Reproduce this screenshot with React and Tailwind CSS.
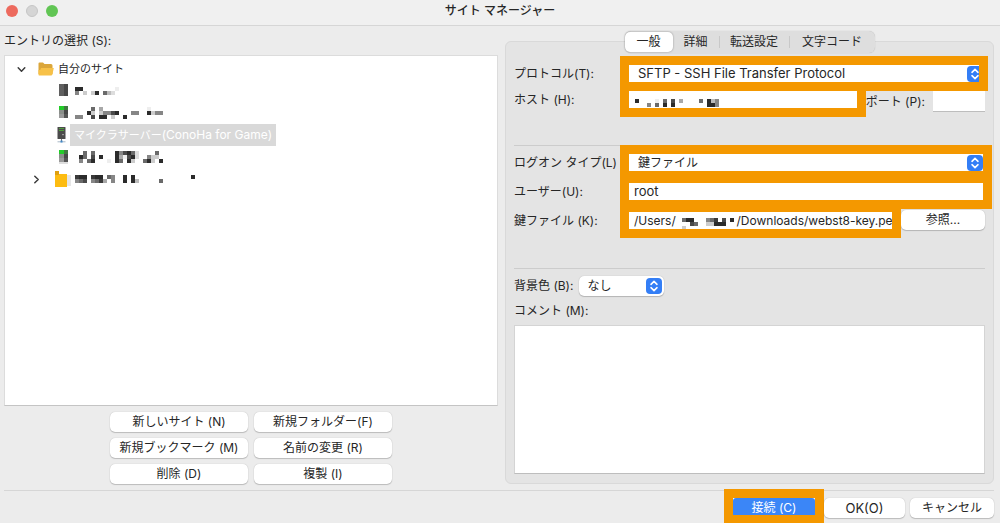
import React from 'react';

const shades = {
  2: '#2b2b2b',
  3: '#3a3a3a',
  4: '#4a4a4a',
  6: '#6a6a6a',
  8: '#868686',
  a: '#a8a8a8',
  b: '#bcbcbc',
  c: '#cccccc',
  d: '#dddddd',
  e: '#eeeeee',
};

// Masked text: every character is one 4px cell, '.' is empty
const Mosaic = ({ rows }) => {
  const cols = Math.max(...rows.map((row) => row.length));
  return (
    <svg width={cols * 4} height={rows.length * 4} shapeRendering="crispEdges" aria-hidden="true" className="shrink-0">
      {rows.map((row, y) =>
        row.split('').map((c, x) =>
          shades[c] ? <rect key={`${x}-${y}`} x={x * 4} y={y * 4} width="4" height="4" fill={shades[c]} /> : null
        )
      )}
    </svg>
  );
};

const FolderOpenIcon = () => (
  <svg width="16" height="14" viewBox="0 0 16 14" className="shrink-0">
    <path d="M0.5 1.5Q0.5 0.5 1.5 0.5H5L6.5 2H13Q14.5 2 14.5 3.5V12H0.5Z" fill="#dba63a" />
    <path d="M3 6H15.8L14.4 12.5Q14.2 13.5 13 13.5H1.2Q0.4 13.4 0.5 12.5V8H2.2Z" fill="#f7c148" />
  </svg>
);

const ServerIcon = () => (
  <svg width="9" height="16" viewBox="0 0 9 16" className="shrink-0">
    <rect x="0.5" y="0" width="8" height="12" rx="0.6" fill="#4b4b4b" />
    <path d="M2 1.5H7M2 3.5H7" stroke="#4f9d3c" strokeWidth="1" />
    <rect x="5.4" y="7" width="1.2" height="1.2" fill="#cfcfcf" />
    <path d="M4.5 12V14" stroke="#777" strokeWidth="1" />
    <path d="M0.5 14.8H8.5" stroke="#a9b8c6" strokeWidth="1" />
    <rect x="3.5" y="13.5" width="2" height="2" fill="#3e86c8" />
  </svg>
);

const MaskedServerIcon = ({ online, shadow }) => (
  <svg width="9" height="14" viewBox="0 0 9 14" shapeRendering="crispEdges" className="shrink-0">
    <rect width="5" height="12" fill="#606060" />
    <rect x="5" width="4" height="12" fill="#484848" />
    {online && (
      <>
        <rect width="5" height="4" fill="#22cc28" />
        <rect x="5" width="4" height="4" fill="#3f7a40" />
        <rect y="4" width="5" height="4" fill="#8a8f8a" />
        <rect y="8" width="5" height="4" fill="#9a9a9a" />
        <rect x="5" y="8" width="4" height="4" fill="#555" />
      </>
    )}
    {shadow && <rect y="12" width="9" height="2" fill="#dedede" />}
  </svg>
);

const MaskedFolderIcon = () => (
  <svg width="16" height="16" viewBox="0 0 16 16" shapeRendering="crispEdges" className="shrink-0">
    <rect x="12" y="4" width="4" height="11" fill="#e6e6e6" />
    <path d="M0 3H12V16H0Z" fill="#fdbc11" />
    <rect width="4" height="4" fill="#dfa010" />
  </svg>
);

const Chevron = ({ open }) => (
  <svg width="9" height="9" viewBox="0 0 9 9" fill="none" stroke="#3c3c3c" strokeWidth="1.5" strokeLinecap="round" strokeLinejoin="round">
    <path d={open ? 'M1.2 2.8L4.5 6.2L7.8 2.8' : 'M2.8 1.2L6.2 4.5L2.8 7.8'} />
  </svg>
);

const Stepper = ({ className = 'right-0' }) => (
  <svg width="16" height="16" viewBox="0 0 16 16" fill="none" className={`pointer-events-none absolute top-1/2 -translate-y-1/2 ${className}`}>
    <rect width="16" height="16" rx="4" fill="#337ef6" />
    <path d="M5 6.3L8 3.4L11 6.3M5 9.7L8 12.6L11 9.7" stroke="#fff" strokeWidth="1.6" strokeLinecap="round" strokeLinejoin="round" />
  </svg>
);

const Button = ({ children, className = '' }) => (
  <button type="button" className={`h-5 rounded-[5px] bg-white text-center leading-5 shadow-[0_0_1px_#00000040,0_1px_1px_#00000030] ${className}`}>
    {children}
  </button>
);

const TreeRow = ({ children, className = '' }) => (
  <li className={`flex h-[22px] items-center ${className}`}>{children}</li>
);

const EntryList = () => (
  <section className="flex w-[494px] shrink-0 flex-col">
    <h2 className="h-[29px] leading-[29px]">エントリの選択 (S):</h2>
    <ul className="h-[351px] border border-[#dcdcdc] border-b-[#c4c4c4] bg-white pt-[2px] text-[11px]">
      <TreeRow className="pl-3">
        <Chevron open />
        <span className="ml-3 flex items-center gap-1">
          <FolderOpenIcon />
          自分のサイト
        </span>
      </TreeRow>
      <TreeRow className="gap-[7px] pl-[54px]">
        <MaskedServerIcon />
        <Mosaic rows={['22........e', '8.c.c2.6bd.']} />
      </TreeRow>
      <TreeRow className="gap-[7px] pl-[54px]">
        <MaskedServerIcon online />
        <Mosaic rows={['....6.a...........e', '...2c.c8842...88..2c88', '88..4.22.c..2']} />
      </TreeRow>
      <TreeRow className="gap-1 pl-[52px]">
        <ServerIcon />
        <span className="h-[22px] w-[206px] whitespace-nowrap bg-[#d9d9d9] pl-1 leading-[22px] text-white">
          マイクラサーバー<span className="text-xs">(ConoHa for Game)</span>
        </span>
      </TreeRow>
      <TreeRow className="gap-[7px] pl-[54px]">
        <MaskedServerIcon online shadow />
        <Mosaic rows={['..6.6.....28426d....6', '.26.4.2...2ae42d..8cc', '.8.62...e.26.2c..62c.2']} />
      </TreeRow>
      <TreeRow className="pl-[27px]">
        <Chevron />
        <span className="ml-[14px] flex items-center gap-1">
          <MaskedFolderIcon />
          <Mosaic rows={['322.322.68..2.2..............2', '864.863a.8..2.2b.....6']} />
        </span>
      </TreeRow>
    </ul>
    <div className="mx-auto mt-[6px] grid grid-cols-[138px_138px] gap-x-[6px] gap-y-[6px]">
      <Button>新しいサイト (N)</Button>
      <Button>新規フォルダー(F)</Button>
      <Button>新規ブックマーク (M)</Button>
      <Button>名前の変更 (R)</Button>
      <Button>削除 (D)</Button>
      <Button>複製 (I)</Button>
    </div>
  </section>
);

const Tabs = () => (
  <div role="tablist" className="absolute left-1/2 -top-[11px] flex h-[22px] w-[250px] -translate-x-1/2 items-center rounded-md bg-[#dedede] shadow-[0_0_1px_#00000040]">
    <button type="button" role="tab" aria-selected="true" className="h-5 w-12 rounded-[5px] bg-white shadow-[0_0_2px_#00000060]">一般</button>
    <button type="button" role="tab" aria-selected="false" className="h-3 w-[47px] border-r border-[#c8c8c8] leading-3">詳細</button>
    <button type="button" role="tab" aria-selected="false" className="h-3 w-[70px] border-r border-[#c8c8c8] leading-3">転送設定</button>
    <button type="button" role="tab" aria-selected="false" className="h-3 flex-1 leading-3">文字コード</button>
  </div>
);

const Label = ({ htmlFor, children }) => (
  <label htmlFor={htmlFor} className="w-[106px] shrink-0 whitespace-nowrap leading-[17px]">
    {children}
  </label>
);

const marked = 'outline-[9px] outline-solid outline-[#f49800]';

const SiteForm = () => (
  <section className="relative mt-[15px] flex min-w-0 flex-1 flex-col rounded-md border border-[#d9d9d9] bg-[#e4e4e4] px-2 pb-[9px] pt-[23px]">
    <Tabs />
    <div className="flex h-[17px] gap-[9px]">
      <Label htmlFor="protocol">プロトコル(T):</Label>
      <div className={`relative mr-[6px] flex-1 overflow-hidden bg-white ${marked}`}>
        <select id="protocol" className="block h-[17px] w-full appearance-none pl-[9px] text-[13px] leading-[17px] outline-none">
          <option>SFTP - SSH File Transfer Protocol</option>
        </select>
        <Stepper className="-right-1" />
      </div>
    </div>
    <div className="mt-[9px] flex h-[21px] items-start gap-[9px]">
      <Label htmlFor="host">ホスト (H):</Label>
      <div className={`relative h-[17px] flex-1 bg-white ${marked}`}>
        <input id="host" type="text" className="block h-[17px] w-full outline-none" />
        <div className="pointer-events-none absolute left-[6px] top-2">
          <Mosaic rows={['2....e.6.4.a....6.2b8', '...8.6.2.2........228']} />
        </div>
      </div>
      <div className="flex items-start gap-2">
        <label htmlFor="port" className="leading-[21px]">ポート (P):</label>
        <input id="port" type="text" className="h-[21px] w-[52px] border-b border-[#bdbdbd] bg-white px-1 outline-none" />
      </div>
    </div>
    <hr className="mt-[33px] border-[#cccccc]" />
    <div className="mt-2 flex h-[17px] gap-[9px]">
      <Label htmlFor="logon">ログオン タイプ(L)</Label>
      <div className={`relative mr-[2px] flex-1 bg-white ${marked}`}>
        <select id="logon" className="block h-[17px] w-full appearance-none pl-[9px] leading-[17px] outline-none">
          <option>鍵ファイル</option>
        </select>
        <Stepper />
      </div>
    </div>
    <div className="mt-3 flex h-[17px] gap-[9px]">
      <Label htmlFor="user">ユーザー(U):</Label>
      <input id="user" type="text" defaultValue="root" className={`mr-[2px] min-w-0 flex-1 bg-white pl-[5px] text-[13px] ${marked}`} />
    </div>
    <div className="mt-[10px] flex h-5 items-center gap-[9px]">
      <Label htmlFor="key">鍵ファイル (K):</Label>
      <div className={`relative h-[17px] flex-1 overflow-hidden bg-white ${marked}`}>
        <input id="key" type="text" defaultValue="/Users/                  /Downloads/webst8-key.pem" className="block h-[17px] w-full whitespace-pre pl-[5px] outline-none" />
        <div className="pointer-events-none absolute left-[53px] top-[6px]">
          <Mosaic rows={['622...863.4.2', '..46..cc222', 'c']} />
        </div>
      </div>
      <Button className="w-[84px]">参照...</Button>
    </div>
    <hr className="mt-[38px] border-[#cccccc]" />
    <div className="mt-[7px] flex h-5 items-center gap-[6px]">
      <label htmlFor="color">背景色 (B):</label>
      <div className="relative h-5 w-[85px] rounded-[5px] bg-white shadow-[0_0_1px_#00000040,0_1px_1px_#00000030]">
        <select id="color" className="block h-5 w-full appearance-none pl-2 leading-5 outline-none">
          <option>なし</option>
        </select>
        <Stepper className="right-[2px]" />
      </div>
    </div>
    <label htmlFor="comment" className="mt-[5px] h-5 leading-5">コメント (M):</label>
    <textarea id="comment" className="mt-1 h-[149px] resize-none border border-[#d4d4d4] border-b-[#bdbdbd] bg-white p-1 outline-none" />
  </section>
);

export default function App() {
  return (
    <div className="flex h-screen flex-col overflow-hidden bg-[#ececec] font-[Inter,'Noto_Sans_CJK_JP',sans-serif] text-xs text-[#262626]">
      <header className="relative flex h-[26px] shrink-0 items-center justify-center border-b border-[#d6d6d6] bg-[#f0f0f0] pb-1">
        <div className="absolute left-[6px] top-[5px] flex gap-2">
          <span className="h-3 w-3 rounded-full bg-[#ed6a5e]" />
          <span className="h-3 w-3 rounded-full border border-[#c6c6c6] bg-[#d5d5d5]" />
          <span className="h-3 w-3 rounded-full bg-[#61c554]" />
        </div>
        <h1 className="font-medium">サイト マネージャー</h1>
      </header>
      <main className="flex gap-[7px] pl-1 pr-[6px]">
        <EntryList />
        <SiteForm />
      </main>
      <footer className="ml-1 mr-[6px] mt-[6px] flex justify-end gap-[5px] border-t border-[#d6d6d6] pt-[7px]">
        <div className={`mr-1 h-[17px] w-[82px] bg-white ${marked}`}>
          <button type="button" className="h-[17px] w-full rounded-t-[3px] bg-[#3b86f7] leading-[19px] text-white">接続 (C)</button>
        </div>
        <Button className="w-[81px] text-[13px]">OK(O)</Button>
        <Button className="w-[84px]">キャンセル</Button>
      </footer>
    </div>
  );
}
